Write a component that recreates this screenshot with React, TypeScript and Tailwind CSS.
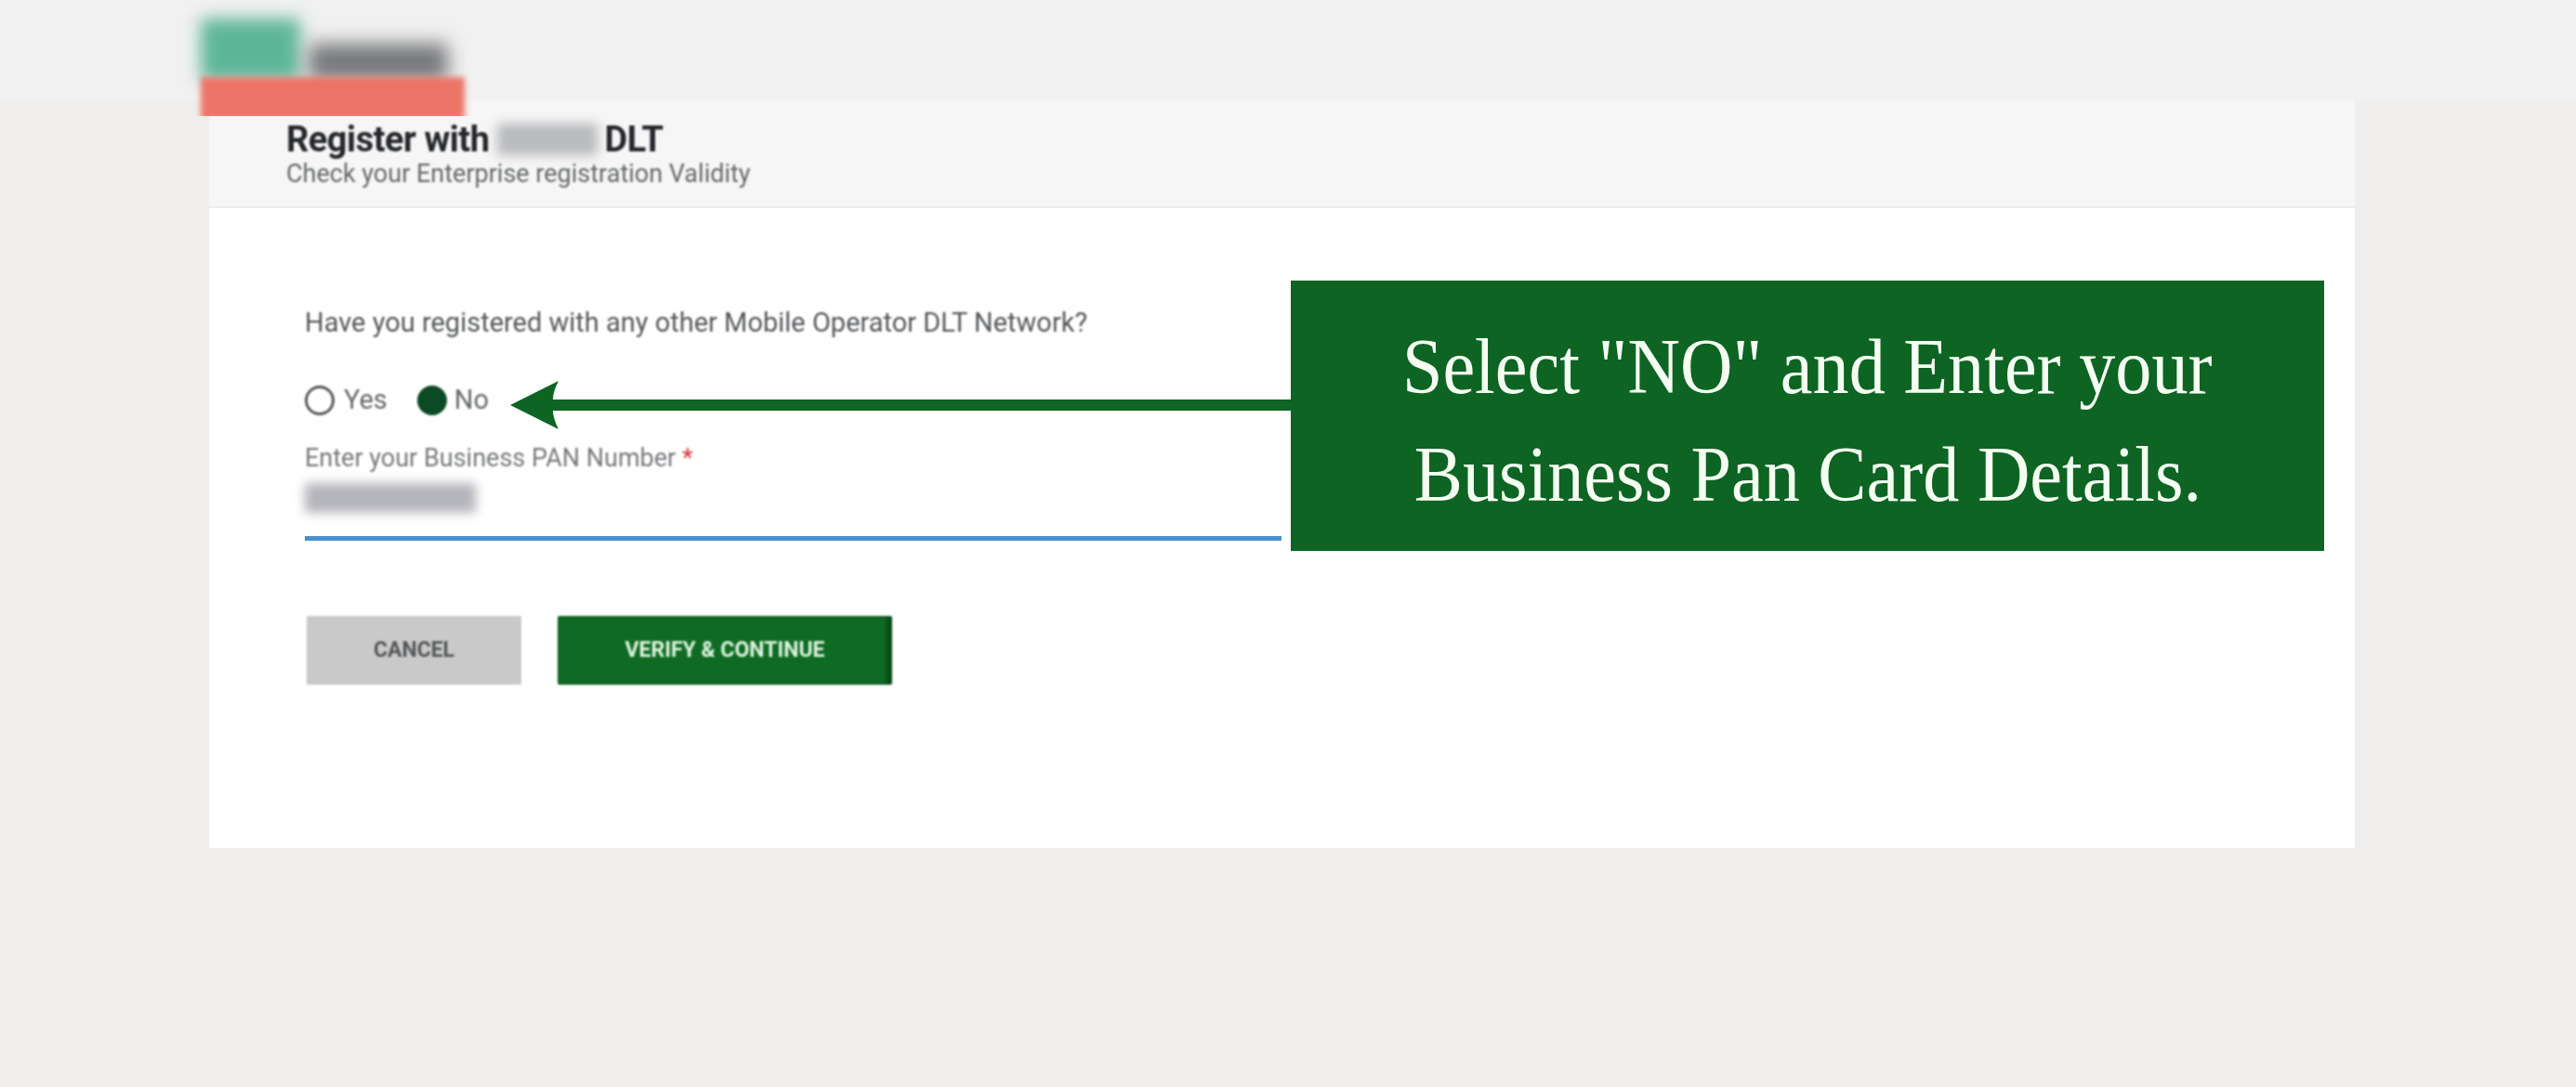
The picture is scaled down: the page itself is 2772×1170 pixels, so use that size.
export default function App() {
  return (
    <div className="relative h-[1170px] w-[2772px] overflow-hidden bg-[#efeeed] font-['Roboto',sans-serif]">
      {/* top strip with blurred logo */}
      <div className="h-[108px] bg-[#f1f1f1] pl-[216px] pt-[20px]">
        <div className="relative z-10 h-[105px] w-[284px] [clip-path:inset(-30px_-30px_0_-30px)]">
          <div className="flex h-[67px] items-end gap-[9px]">
            <div className="h-[67px] w-[107px] bg-[#5db597] blur-[9px]" />
            <div className="h-[40px] w-[150px] bg-[#77787a] blur-[10px]" />
          </div>
          <div className="-mt-[4px] h-[46px] bg-[#ec7467] blur-[3px]" />
        </div>
      </div>

      <div className="ml-[225px] w-[2309px] bg-white">
        <div className="h-[116px] border-b-2 border-[#ececec] bg-[#f6f6f6] pl-[83px] pt-[20px]">
          <h1 className="flex h-[44px] items-center text-[38px] font-bold tracking-[-0.5px] leading-[44px] text-[#25272b] blur-[0.9px]">
            Register with
            <span className="mx-[8px] h-[34px] w-[108px] bg-[#b9babd] blur-[6px]" />
            DLT
          </h1>
          <p className="text-[27px] leading-[30px] text-[#66686b] blur-[0.9px]">Check your Enterprise registration Validity</p>
        </div>

        <div className="h-[689px] pl-[103px] pt-[105px]">
          <p className="text-[29px] leading-[36px] text-[#55575a] blur-[0.9px]">
            Have you registered with any other Mobile Operator DLT Network?
          </p>

          <div className="mt-[50px] flex h-[32px] items-center text-[29px] text-[#66686b] blur-[0.9px]">
            <span className="h-[32px] w-[32px] rounded-full border-[3px] border-[#55575a]" />
            <span className="ml-[10px]">Yes</span>
            <span className="ml-[32px] h-[32px] w-[32px] rounded-full bg-[#0b4a24]" />
            <span className="ml-[8px]">No</span>
          </div>

          <p className="mt-[32px] text-[27px] leading-[28px] text-[#77797c] blur-[0.9px]">
            Enter your Business PAN Number <span className="text-[#d9323a]">*</span>
          </p>
          <div className="mt-[13px] h-[32px] w-[184px] bg-[#b4b4bb] blur-[6px]" />
          <div className="mt-[25px] h-[5px] w-[1051px] bg-[#4a90cf] blur-[0.7px]" />

          <div className="mt-[81px] flex gap-[39px] pl-[2px]">
            <button className="flex h-[74px] w-[231px] items-center justify-center bg-[#c9c9c9] text-[23px] font-bold text-[#55575a] blur-[0.9px]">
              CANCEL
            </button>
            <button className="flex h-[74px] w-[360px] items-center justify-center rounded-[2px] bg-[#0f6b24] text-[23px] font-bold text-[#dff5df] shadow-[inset_-6px_0_4px_rgba(0,40,10,0.5)] blur-[0.9px]">
              VERIFY &amp; CONTINUE
            </button>
          </div>
        </div>
      </div>

      {/* annotation over the form */}
      <div className="absolute left-[1389px] top-[302px] flex h-[291px] w-[1112px] flex-col items-center justify-center bg-[#0d6423] pt-[8px] font-['Liberation_Serif',serif] text-[85px] leading-[116px] text-[#f4fff2]">
        <span className="scale-x-[0.92] whitespace-nowrap">Select "NO" and Enter your</span>
        <span className="scale-x-[0.92] whitespace-nowrap">Business Pan Card Details.</span>
      </div>
      <svg className="absolute left-[545px] top-[406px]" width="846" height="60" viewBox="0 0 846 60">
        <path d="M4 30 L56 4 Q50 16 50 24 H846 V36 H50 Q50 44 56 56 Z" fill="#0d6423" />
      </svg>
    </div>
  );
}
